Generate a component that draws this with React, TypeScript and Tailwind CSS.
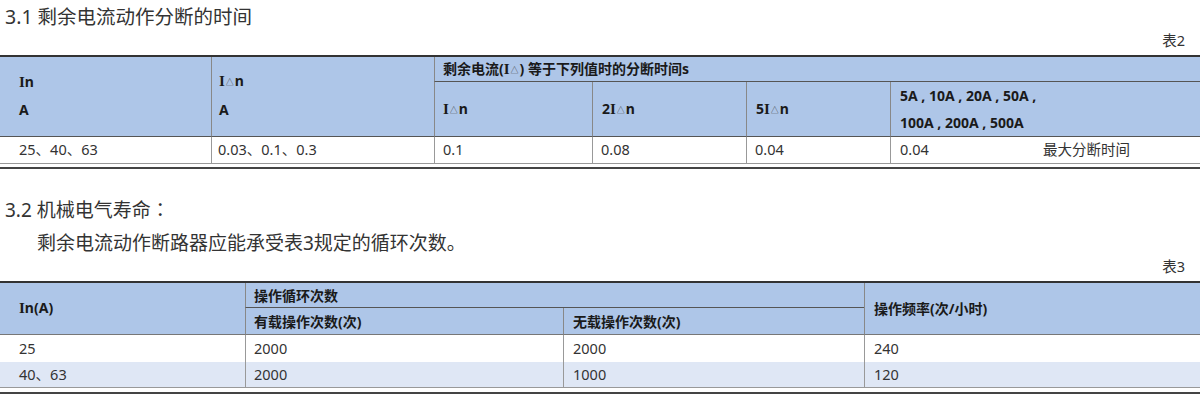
import React from 'react';

const Delta = () => (
  <span className="relative -top-[1px] mx-[1px] text-[8px] font-normal text-[#444]">△</span>
);

const SerifI = () => <span className="font-['Liberation_Serif',serif] text-[15px]">I</span>;

const Section31 = () => {
  return (
    <div>
      <div className="h-[34px] pl-[5px] text-[19.5px] leading-[34px] text-[#333]">3.1 剩余电流动作分断的时间</div>
      <div className="h-[21px] pr-[15px] text-right text-[14.5px] leading-[12px] text-[#333]">表2</div>
      <div className="border-t-2 border-[#333]">
        <table className="w-full table-fixed border-separate border-spacing-0 text-left">
          <colgroup>
            <col className="w-[211px]" />
            <col className="w-[223px]" />
            <col className="w-[158px]" />
            <col className="w-[154px]" />
            <col className="w-[144px]" />
            <col />
          </colgroup>
          <thead className="bg-[#aec6e8] text-[14px] font-bold text-[#1a1a1a]">
            <tr className="h-[25px]">
              <th rowSpan={2} className="border-b border-[#555] pl-[19px] align-middle font-bold leading-[27px]">
                <div className="-mt-[3px]">
                  <SerifI />n<br />A
                </div>
              </th>
              <th rowSpan={2} className="border-b border-l border-[#555] border-l-[#888] pl-[7px] align-middle font-bold leading-[27px]">
                <div className="-mt-[3px]">
                  <SerifI />
                  <Delta />n<br />A
                </div>
              </th>
              <th colSpan={4} className="border-b border-l border-[#555] border-l-[#888] pl-[8px] font-bold">
                剩余电流(<SerifI />
                <Delta />) 等于下列值时的分断时间s
              </th>
            </tr>
            <tr className="h-[53px]">
              <th className="border-b border-l border-[#555] border-l-[#888] pl-[8px] font-bold">
                <SerifI />
                <Delta />n
              </th>
              <th className="border-b border-l border-[#555] border-l-[#888] pl-[9px] font-bold">
                2<SerifI />
                <Delta />n
              </th>
              <th className="border-b border-l border-[#555] border-l-[#888] pl-[9px] font-bold">
                5<SerifI />
                <Delta />n
              </th>
              <th className="border-b border-l border-[#555] border-l-[#888] pl-[9px] font-bold leading-[27px]">
                5A , 10A , 20A , 50A ,<br />100A , 200A , 500A
              </th>
            </tr>
          </thead>
          <tbody className="text-[14.5px] text-[#333]">
            <tr className="h-[27px]">
              <td className="border-b border-[#999] pl-[19px]">25、40、63</td>
              <td className="border-b border-l border-[#999] pl-[6px]">0.03、0.1、0.3</td>
              <td className="border-b border-l border-[#999] pl-[8px]">0.1</td>
              <td className="border-b border-l border-[#999] pl-[8px]">0.08</td>
              <td className="border-b border-l border-[#999] pl-[8px]">0.04</td>
              <td className="border-b border-l border-[#999] pl-[9px]">
                <div className="flex">
                  <span className="w-[143px]">0.04</span>
                  <span>最大分断时间</span>
                </div>
              </td>
            </tr>
          </tbody>
        </table>
        <div className="mt-[3px] border-t-2 border-[#444]" />
      </div>
    </div>
  );
};

const Section32 = () => {
  return (
    <div className="mt-[23px]">
      <div className="h-[34px] pl-[5px] text-[19px] leading-[34px] text-[#333]">
        3.2 机械电气寿命<span className="font-['Noto_Sans_CJK_TC',sans-serif]">：</span>
      </div>
      <div className="h-[34px] pl-[37px] text-[19px] leading-[34px] text-[#333]">剩余电流动作断路器应能承受表3规定的循环次数。</div>
      <div className="h-[21px] pr-[15px] text-right text-[14.5px] leading-[12px] text-[#333]">表3</div>
      <div className="border-t-2 border-[#333]">
        <table className="w-full table-fixed border-separate border-spacing-0 text-left">
          <colgroup>
            <col className="w-[245px]" />
            <col className="w-[318px]" />
            <col className="w-[301px]" />
            <col />
          </colgroup>
          <thead className="bg-[#aec6e8] text-[14px] font-bold text-[#1a1a1a]">
            <tr className="h-[25px]">
              <th rowSpan={2} className="border-b border-[#777] pl-[19px] font-bold">
                <SerifI />n(A)
              </th>
              <th colSpan={2} className="border-b border-l border-[#555] border-l-[#888] pl-[8px] font-bold">操作循环次数</th>
              <th rowSpan={2} className="border-b border-l border-[#777] border-l-[#888] pl-[9px] font-bold">操作频率(次/小时)</th>
            </tr>
            <tr className="h-[27px]">
              <th className="border-b border-l border-[#777] border-l-[#888] pl-[8px] font-bold">有载操作次数(次)</th>
              <th className="border-b border-l border-[#777] border-l-[#888] pl-[9px] font-bold">无载操作次数(次)</th>
            </tr>
          </thead>
          <tbody className="text-[14.5px] text-[#333]">
            <tr className="h-[27px] bg-white">
              <td className="pl-[19px]">25</td>
              <td className="border-l border-[#999] pl-[8px]">2000</td>
              <td className="border-l border-[#999] pl-[9px]">2000</td>
              <td className="border-l border-[#999] pl-[9px]">240</td>
            </tr>
            <tr className="h-[26px] bg-[#dfe7f5]">
              <td className="border-b border-[#999] pl-[19px]">40、63</td>
              <td className="border-b border-l border-[#999] pl-[8px]">2000</td>
              <td className="border-b border-l border-[#999] pl-[9px]">1000</td>
              <td className="border-b border-l border-[#999] pl-[9px]">120</td>
            </tr>
          </tbody>
        </table>
        <div className="mt-[4px] border-t-2 border-[#444]" />
      </div>
    </div>
  );
};

export default function App() {
  return (
    <div className="h-[396px] w-[1200px] overflow-hidden bg-white font-['Noto_Sans','Noto_Sans_CJK_SC',sans-serif]">
      <Section31 />
      <Section32 />
    </div>
  );
}
